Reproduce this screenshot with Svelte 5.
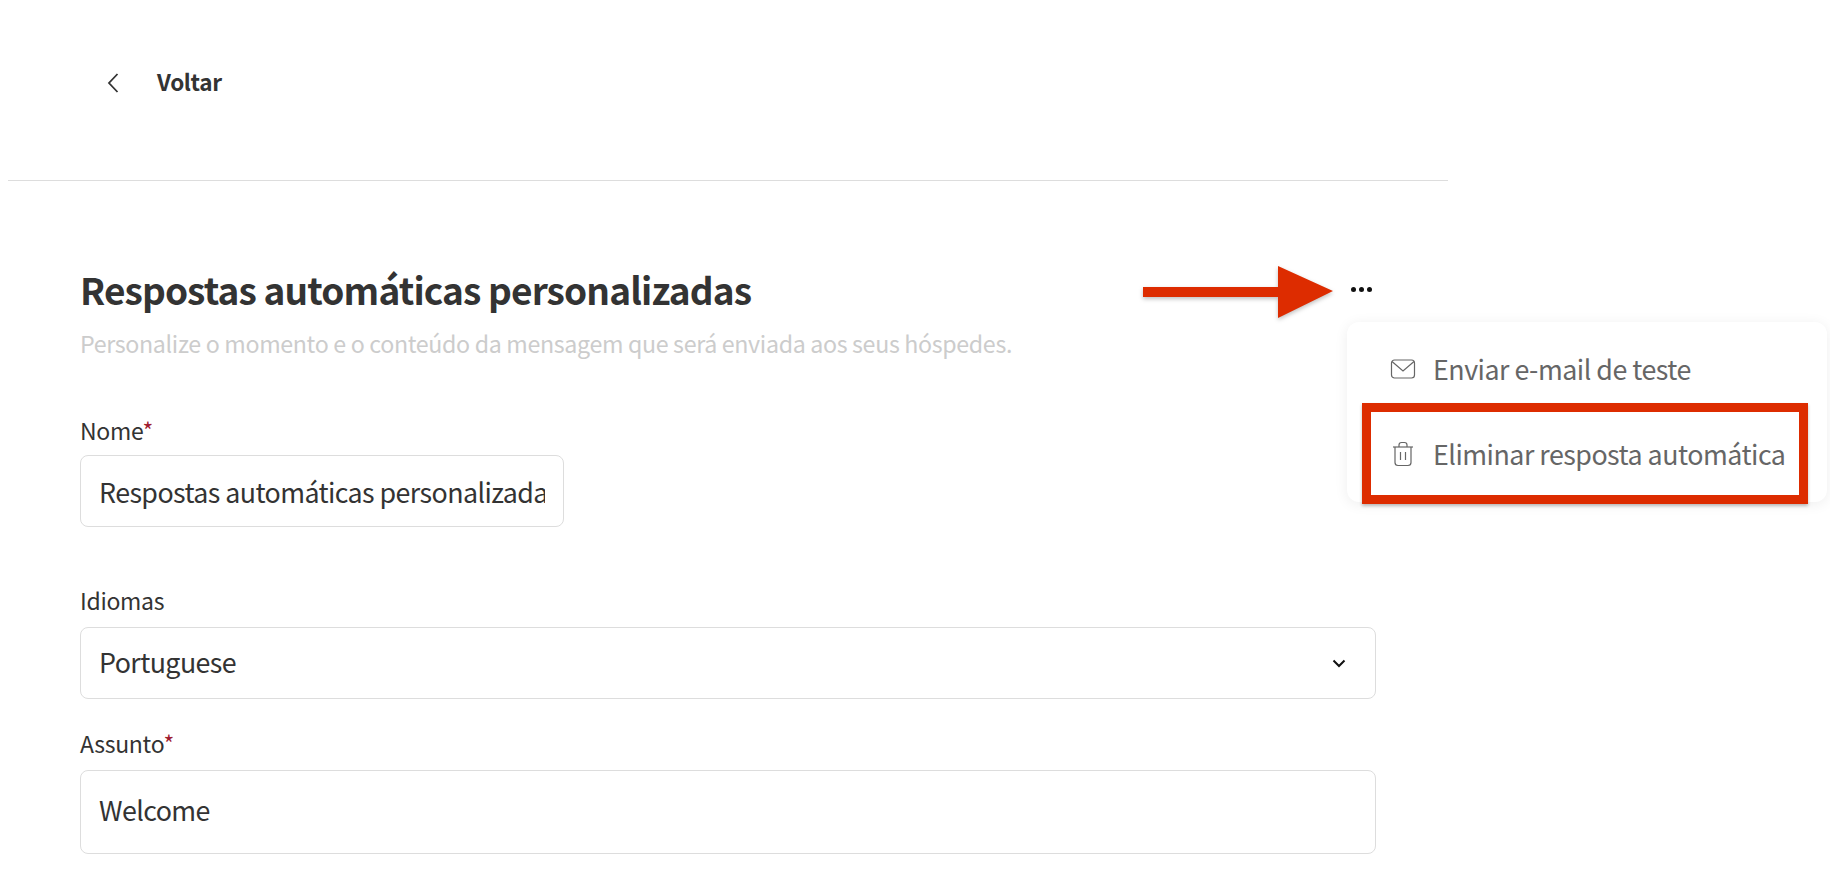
<script lang="ts">
  let nome = $state('Respostas automáticas personalizadas')
  let assunto = $state('Welcome')
  let idioma = $state('Portuguese')
</script>

<div class="page">
  <header class="topbar">
    <button class="back" type="button">
      <svg width="14" height="22" viewBox="0 0 14 22" fill="none" stroke="#333" stroke-width="1.8">
        <path d="M11.5 2 L3 11 L11.5 20" />
      </svg>
      <span>Voltar</span>
    </button>
  </header>

  <main class="content">
    <div class="head">
      <h1>Respostas automáticas personalizadas</h1>
      <button class="more" type="button" aria-label="Mais">
        <i></i><i></i><i></i>
      </button>
    </div>
    <p class="sub">Personalize o momento e o conteúdo da mensagem que será enviada aos seus hóspedes.</p>

    <label class="field nome">
      <span class="lbl">Nome<b>*</b></span>
      <input bind:value={nome} />
    </label>

    <label class="field idiomas">
      <span class="lbl">Idiomas</span>
      <div class="select">
        <span>{idioma}</span>
        <svg width="14" height="9" viewBox="0 0 14 9" fill="none" stroke="#111" stroke-width="2">
          <path d="M1.5 1.5 L7 7 L12.5 1.5" />
        </svg>
      </div>
    </label>

    <label class="field assunto">
      <span class="lbl">Assunto<b>*</b></span>
      <input class="tall" bind:value={assunto} />
    </label>
  </main>

  <div class="menu">
    <div class="item">
      <svg width="26" height="22" viewBox="0 0 26 22" fill="none" stroke="#666" stroke-width="1.2">
        <rect x="1.5" y="2" width="23" height="18" rx="3" />
        <path d="M2 3.5 L13 13 L24 3.5" />
      </svg>
      <span>Enviar e-mail de teste</span>
    </div>
    <div class="item">
      <svg width="26" height="26" viewBox="0 0 26 26" fill="none" stroke="#666" stroke-width="1.2">
        <path d="M3 6 H23" />
        <path d="M9 6 V4 Q9 1.5 11.5 1.5 H14.5 Q17 1.5 17 4 V6" />
        <path d="M5 6 V21.5 Q5 24.5 8 24.5 H18 Q21 24.5 21 21.5 V6" />
        <path d="M10.5 11 V19 M15.5 11 V19" />
      </svg>
      <span>Eliminar resposta automática</span>
    </div>
  </div>

  <!-- annotations on top of the screenshot -->
  <svg class="arrow" width="200" height="60" viewBox="0 0 200 60">
    <path d="M2 23 H137 V2 L192 27 L137 54 V33 H2 Z" fill="#dd2c00" />
  </svg>
  <div class="highlight"></div>
</div>

<style>
  :global(body) {
    margin: 0;
    background: #fff;
  }

  .page {
    position: relative;
    width: 1830px;
    height: 890px;
    overflow: hidden;
    font-family: "Noto Sans CJK SC", "Noto Sans", sans-serif;
    color: #333;
  }

  .topbar {
    width: 1440px;
    height: 180px;
    margin-left: 8px;
    border-bottom: 1px solid #ddd;
    box-sizing: content-box;
  }

  .back {
    display: flex;
    align-items: center;
    gap: 37px;
    margin: 0;
    padding: 65px 0 0 98px;
    background: none;
    border: none;
    font: inherit;
    font-size: 22.5px;
    font-weight: 600;
    letter-spacing: -0.35px;
    color: #333;
  }

  .back svg {
    margin-top: 3px;
  }

  .content {
    width: 1296px;
    margin-left: 80px;
    padding-top: 86px;
  }

  .head {
    display: flex;
    align-items: center;
    justify-content: space-between;
  }

  h1 {
    margin: 0;
    font-size: 37px;
    line-height: 44px;
    font-weight: 700;
    letter-spacing: -0.86px;
  }

  .more {
    display: flex;
    gap: 3px;
    padding: 0;
    margin-right: 4px;
    background: none;
    border: none;
  }

  .more i {
    width: 5px;
    height: 5px;
    border-radius: 50%;
    background: #111;
  }

  .sub {
    margin: 17px 0 0;
    font-size: 23.2px;
    line-height: 30px;
    letter-spacing: -0.33px;
    color: #ccc;
  }

  .field {
    display: block;
  }

  .lbl {
    display: block;
    font-size: 23px;
    line-height: 30px;
    margin-bottom: 12px;
    letter-spacing: -0.3px;
    color: #333;
  }

  .lbl b {
    font-weight: 400;
    color: #a01c30;
  }

  .nome {
    margin-top: 57px;
    width: 484px;
  }

  .nome .lbl {
    margin-bottom: 10px;
  }

  .idiomas {
    margin-top: 58px;
  }

  .assunto {
    margin-top: 29px;
  }

  input,
  .select {
    display: flex;
    align-items: center;
    justify-content: space-between;
    box-sizing: border-box;
    width: 100%;
    height: 72px;
    padding: 0 18px;
    border: 1px solid #ddd;
    border-radius: 8px;
    background: #fff;
    font: inherit;
    font-size: 26.8px;
    letter-spacing: -0.58px;
    color: #333;
    outline: none;
  }

  input.tall {
    height: 84px;
    padding-bottom: 6px;
  }

  .select span {
    margin-top: -4px;
  }

  .select svg {
    margin-right: 11px;
  }

  .menu {
    position: absolute;
    left: 1347px;
    top: 322px;
    width: 480px;
    height: 180px;
    padding-top: 4px;
    box-sizing: border-box;
    border-radius: 12px;
    background: #fff;
    box-shadow: 0 2px 14px rgba(0, 0, 0, 0.07);
  }

  .item {
    display: flex;
    align-items: center;
    gap: 17px;
    height: 85px;
    padding-left: 43px;
    font-size: 26.8px;
    letter-spacing: -0.5px;
    color: #666;
  }

  .arrow {
    position: absolute;
    left: 1141px;
    top: 264px;
    filter: drop-shadow(0 2px 2px rgba(0, 0, 0, 0.25));
  }

  .highlight {
    position: absolute;
    left: 1362px;
    top: 403px;
    width: 446px;
    height: 101px;
    box-sizing: border-box;
    border: 9px solid #dd2c00;
    box-shadow: 0 2px 3px rgba(0, 0, 0, 0.25);
  }
</style>
